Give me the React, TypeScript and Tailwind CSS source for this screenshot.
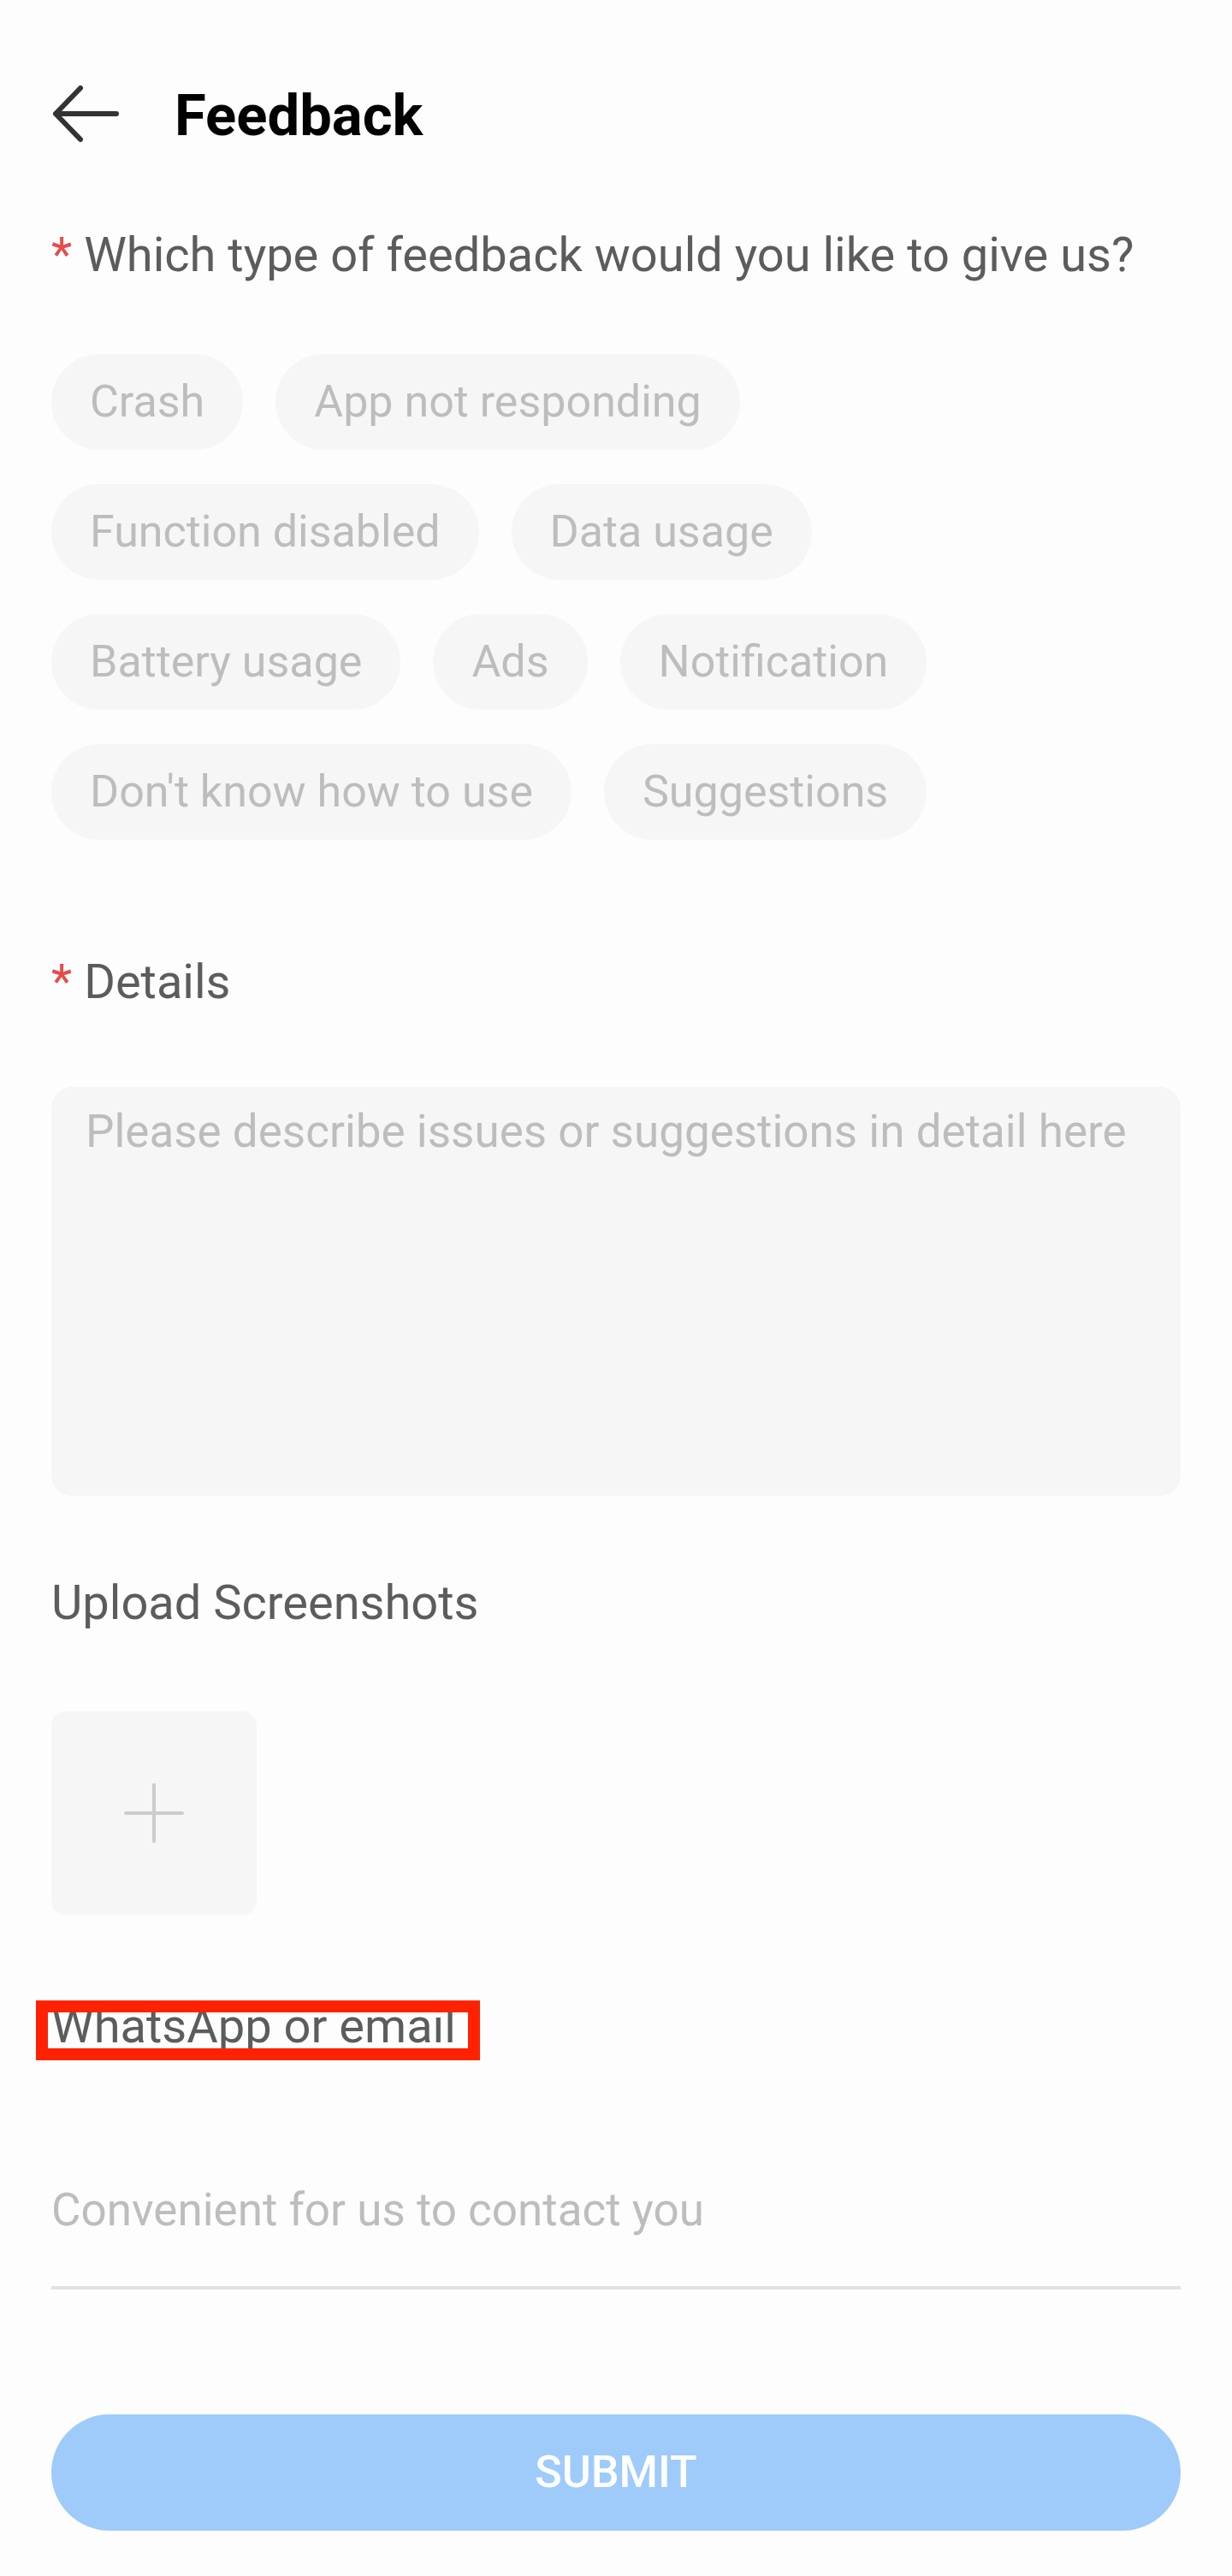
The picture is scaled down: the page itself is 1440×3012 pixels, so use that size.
import { useState } from "react"

const rows = [
  ["Crash", "App not responding"],
  ["Function disabled", "Data usage"],
  ["Battery usage", "Ads", "Notification"],
  ["Don't know how to use", "Suggestions"],
]

function BackArrow() {
  return (
    <svg width="80" height="68" viewBox="0 0 80 68" fill="none">
      <path
        d="M34 4 L5 34 L34 64 M5 34 H76"
        stroke="#333333"
        strokeWidth="6"
        strokeLinecap="round"
        strokeLinejoin="round"
      />
    </svg>
  )
}

export default function App() {
  const [selected, setSelected] = useState<string | null>(null)

  return (
    <div
      className="min-h-[3012px] w-[1440px] bg-[#fdfdfd] px-[60px] pb-[53px]"
      style={{ fontFamily: "Roboto, 'Noto Sans', sans-serif" }}
    >
      {/* toolbar */}
      <div className="flex h-[266px] items-center">
        <button className="flex w-[144px] items-center">
          <BackArrow />
        </button>
        <h1 className="pt-[4px] text-[67px] font-bold leading-none text-black">Feedback</h1>
      </div>

      <p className="text-[56px] leading-[64px] text-[#5c5c5c]">
        <span className="mr-[14px] text-[#e84b4b]">*</span>
        Which type of feedback would you like to give us?
      </p>

      <div className="mt-[84px] flex flex-col gap-[40px]">
        {rows.map((row, i) => (
          <div key={i} className="flex gap-[38px]">
            {row.map((t) => (
              <button
                key={t}
                onClick={() => setSelected(t)}
                className={`flex h-[112px] items-center rounded-full px-[45px] text-[52px] ${
                  selected === t ? "bg-[#e3f0fe] text-[#3b8cf0]" : "bg-[#f6f6f6] text-[#bdbdbd]"
                }`}
              >
                {t}
              </button>
            ))}
          </div>
        ))}
      </div>

      <p className="mt-[134px] text-[56px] leading-[64px] text-[#5c5c5c]">
        <span className="mr-[14px] text-[#e84b4b]">*</span>
        Details
      </p>

      <textarea
        placeholder="Please describe issues or suggestions in detail here"
        className="mt-[91px] block h-[478px] w-full resize-none rounded-[24px] bg-[#f6f6f6] px-[40px] py-[20px] text-[53px] leading-[64px] text-[#333] outline-none placeholder:text-[#bdbdbd]"
      />

      <p className="mt-[93px] text-[56px] leading-[64px] text-[#5c5c5c]">Upload Screenshots</p>

      <div className="mt-[95px] flex h-[238px] w-[240px] items-center justify-center rounded-[16px] bg-[#f6f6f6]">
        <svg width="70" height="70" viewBox="0 0 70 70">
          <path d="M35 2 V68 M2 35 H68" stroke="#cccccc" strokeWidth="4" strokeLinecap="round" />
        </svg>
      </div>

      <div className="relative mt-[98px]">
        <p className="text-[56px] leading-[64px] text-[#5c5c5c]">WhatsApp or email</p>
        <div className="pointer-events-none absolute left-[-18px] top-[2px] h-[70px] w-[519px] border-[14px] border-[#ff2200]" />
      </div>

      <div className="mt-[151px] border-b-4 border-[#e2e2e2] pb-[57px]">
        <input
          placeholder="Convenient for us to contact you"
          className="block h-[64px] w-full bg-transparent text-[53px] leading-[64px] text-[#333] outline-none placeholder:text-[#bdbdbd]"
        />
      </div>

      <button className="mt-[146px] flex h-[136px] w-full items-center justify-center rounded-full bg-[#9ecbfa] text-[52px] font-medium text-white">
        SUBMIT
      </button>
    </div>
  )
}
